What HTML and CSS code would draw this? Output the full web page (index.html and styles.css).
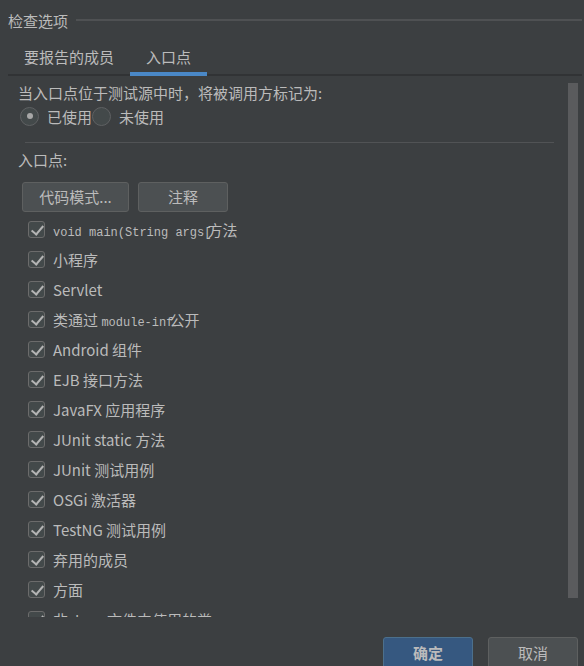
FILE: index.html
```html
<!DOCTYPE html>
<html lang="zh">
<head>
<meta charset="utf-8">
<link rel="stylesheet" href="styles.css">
</head>
<body>
<div class="dialog">
  <div class="title-row">
    <span class="title">检查选项</span>
    <span class="title-line"></span>
  </div>
  <div class="tabs">
    <div class="tab">要报告的成员</div>
    <div class="tab active">入口点</div>
  </div>
  <div class="panel">
    <div class="scroll">
      <div class="label first">当入口点位于测试源中时，将被调用方标记为:</div>
      <div class="radios">
        <label class="radio"><span class="radio-box on"></span>已使用</label>
        <label class="radio"><span class="radio-box"></span>未使用</label>
      </div>
      <div class="sep"></div>
      <div class="label">入口点:</div>
      <div class="btn-row">
        <button class="btn wide">代码模式...</button>
        <button class="btn">注释</button>
      </div>
      <ul class="checks">
        <li><span class="cb"></span><span class="txt"><span class="mono">void main(String args[</span><span class="ov">方法</span></span></li>
        <li><span class="cb"></span><span class="txt">小程序</span></li>
        <li><span class="cb"></span><span class="txt">Servlet</span></li>
        <li><span class="cb"></span><span class="txt">类通过 <span class="mono">module-inf</span><span class="ov">公开</span></span></li>
        <li><span class="cb"></span><span class="txt">Android 组件</span></li>
        <li><span class="cb"></span><span class="txt">EJB 接口方法</span></li>
        <li><span class="cb"></span><span class="txt">JavaFX 应用程序</span></li>
        <li><span class="cb"></span><span class="txt">JUnit static 方法</span></li>
        <li><span class="cb"></span><span class="txt">JUnit 测试用例</span></li>
        <li><span class="cb"></span><span class="txt">OSGi 激活器</span></li>
        <li><span class="cb"></span><span class="txt">TestNG 测试用例</span></li>
        <li><span class="cb"></span><span class="txt">弃用的成员</span></li>
        <li><span class="cb"></span><span class="txt">方面</span></li>
        <li><span class="cb"></span><span class="txt">非 Java 文件中使用的类</span></li>
      </ul>
    </div>
    <div class="scrollbar"><div class="thumb"></div></div>
  </div>
  <div class="footer">
    <button class="btn big primary">确定</button>
    <button class="btn big">取消</button>
  </div>
</div>
</body>
</html>
```

FILE: styles.css
```css
* { box-sizing: border-box; }
html, body {
  margin: 0;
  padding: 0;
  background: #3c3f41;
  height: 666px;
  overflow: hidden;
}
body {
  font-family: "Noto Sans CJK SC", "Noto Sans", sans-serif;
  font-size: 15px;
  color: #bbbbbb;
}
.dialog {
  display: flex;
  flex-direction: column;
  height: 666px;
}
.title-row {
  display: flex;
  align-items: center;
  height: 40px;
  flex: none;
  padding: 0 2px 0 8px;
}
.title-line {
  flex: 1;
  height: 2px;
  background: #4f5153;
  margin-left: 8px;
}
.tabs {
  display: flex;
  flex: none;
  margin: 0 2px 0 8px;
  height: 36px;
  border-bottom: 2px solid #313335;
}
.tab {
  padding: 0 16px;
  display: flex;
  align-items: center;
  margin-bottom: -2px;
  border-bottom: 4px solid transparent;
}
.tab.active {
  border-bottom-color: #4a88c7;
}
.panel {
  display: flex;
  margin: 0 0 0 8px;
  height: 541px;
  flex: none;
  overflow: hidden;
}
.scroll {
  width: 552px;
  padding-left: 10px;
  overflow: hidden;
}
.label {
  height: 20px;
  line-height: 20px;
}
.label.first {
  margin-top: 7px;
}
.radios {
  display: flex;
  height: 24px;
  align-items: center;
  margin-top: 1px;
  padding-left: 2px;
}
.radio {
  display: flex;
  align-items: center;
}
.radio-box {
  width: 19px;
  height: 19px;
  border-radius: 50%;
  border: 1px solid #5f6163;
  background: #43494a;
  margin-right: 8px;
  display: flex;
  align-items: center;
  justify-content: center;
}
.radio-box.on::after {
  content: "";
  width: 6px;
  height: 6px;
  border-radius: 50%;
  background: #a7a7a7;
}
.sep {
  height: 1px;
  background: #515355;
  margin: 14px 6px 7px 7px;
}
.btn-row {
  display: flex;
  gap: 9px;
  margin-top: 12px;
  padding-left: 4px;
}
.btn {
  font-family: inherit;
  font-size: 15px;
  color: #bbbbbb;
  background: #4c5052;
  border: 1px solid #5e6060;
  border-radius: 3px;
  height: 30px;
  width: 90px;
  padding: 0;
  line-height: 28px;
}
.btn.wide { width: 107px; }
.checks {
  list-style: none;
  margin: 2px 0 0 0;
  padding: 0 0 0 10px;
}
.checks li {
  display: flex;
  align-items: center;
  height: 30px;
  white-space: nowrap;
}
.cb {
  width: 17px;
  height: 17px;
  border: 1px solid #6b6b6b;
  border-radius: 3px;
  background: #43494a;
  margin-right: 8px;
  flex: none;
  position: relative;
}
.cb::after {
  content: "";
  position: absolute;
  left: 5px;
  top: 1px;
  width: 5px;
  height: 10px;
  border: solid #b4b4b4;
  border-width: 0 2px 2px 0;
  transform: rotate(40deg);
}
.mono {
  font-family: "Liberation Mono", "DejaVu Sans Mono", monospace;
  font-size: 12px;
}
.ov {
  margin-left: -4px;
}
.scrollbar {
  width: 22px;
  padding: 7px 2px 0 0;
  display: flex;
  justify-content: flex-end;
}
.thumb {
  width: 10px;
  height: 515px;
  background: #5a5b5d;
  margin-right: 2px;
}
.footer {
  display: flex;
  flex: none;
  justify-content: flex-end;
  gap: 15px;
  padding: 20px 6px 0 0;
}
.btn.big {
  height: 32px;
  width: 90px;
  flex: none;
}
.btn.primary {
  background: #365880;
  border-color: #4c708c;
  font-weight: bold;
}
```
